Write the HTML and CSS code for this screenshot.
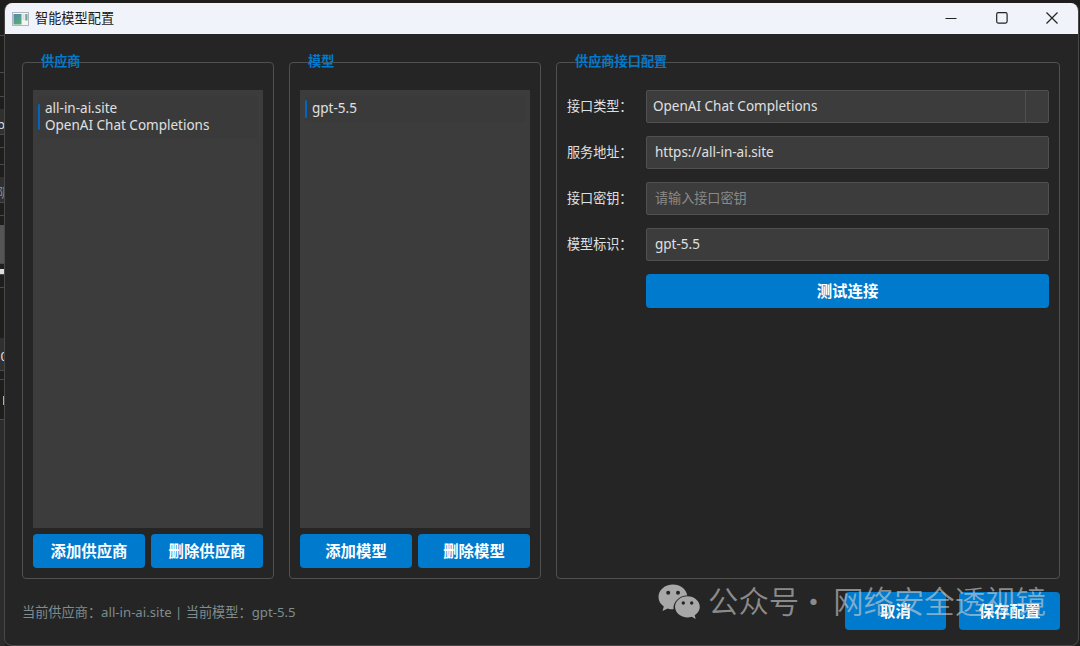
FILE: index.html
```html
<!DOCTYPE html>
<html lang="zh-CN">

<head>
  <meta charset="UTF-8">
  <meta name="viewport" content="width=device-width, initial-scale=1.0">
  <title>智能模型配置</title>
  <link rel="stylesheet" href="styles.css">
</head>

<body>

  <!-- Sliver of the main window behind the dialog -->
  <div class="backdrop">
    <div class="strip head"></div>
    <div class="strip"></div>
    <div class="strip short"></div>
    <div class="strip field"><span>p</span></div>
    <div class="strip gap"></div>
    <div class="strip wide"></div>
    <div class="strip field grey"><span>阴</span></div>
    <div class="strip gap"></div>
    <div class="strip thumb"></div>
    <div class="strip mark"></div>
    <div class="strip gap"></div>
    <div class="strip field last"><span>.0</span></div>
    <div class="strip low"></div>
    <div class="strip caret"><i></i></div>
    <div class="strip rest"></div>
  </div>

  <div class="window">
    <div class="titlebar">
      <svg class="app-icon" width="17" height="14" viewBox="0 0 17 14">
        <defs>
          <linearGradient id="pane" x1="0" y1="0" x2="0.6" y2="1">
            <stop offset="0" stop-color="#4f88b5"/>
            <stop offset="1" stop-color="#58ad74"/>
          </linearGradient>
        </defs>
        <rect x="0.5" y="0.5" width="16" height="13" fill="#f4f5f6" stroke="#b2b5b9"/>
        <rect x="1.5" y="2" width="8" height="10.5" fill="url(#pane)"/>
        <path d="M10.5 3h2M10.5 5h2M10.5 7h2" stroke="#c9ccd0"/>
        <rect x="13.3" y="2" width="2.2" height="6.5" fill="#65a99a"/>
      </svg>
      <span class="title">智能模型配置</span>
      <div class="controls">
        <svg width="12" height="12" viewBox="0 0 12 12"><path d="M0.5 6.5h11"/></svg>
        <svg width="12" height="12" viewBox="0 0 12 12"><rect x="0.7" y="0.7" width="10.4" height="10.4" rx="1.5"/></svg>
        <svg width="12" height="12" viewBox="0 0 12 12"><path d="M0.5 0.5l11 11M11.5 0.5l-11 11"/></svg>
      </div>
    </div>

    <div class="panels">
      <div class="group">
        <div class="legend">供应商</div>
        <div class="list">
          <div class="item">
            <span class="bar"></span>
            <div>all-in-ai.site<br>OpenAI Chat Completions</div>
          </div>
        </div>
        <div class="buttons">
          <button class="btn">添加供应商</button>
          <button class="btn">删除供应商</button>
        </div>
      </div>

      <div class="group">
        <div class="legend">模型</div>
        <div class="list">
          <div class="item single">
            <span class="bar"></span>
            <div>gpt-5.5</div>
          </div>
        </div>
        <div class="buttons">
          <button class="btn">添加模型</button>
          <button class="btn">删除模型</button>
        </div>
      </div>

      <div class="group config">
        <div class="legend">供应商接口配置</div>
        <div class="form">
          <span class="label">接口类型：</span>
          <div class="input combo"><span>OpenAI Chat Completions</span><i class="drop"></i></div>
          <span class="label">服务地址：</span>
          <div class="input">https://all-in-ai.site</div>
          <span class="label">接口密钥：</span>
          <div class="input placeholder">请输入接口密钥</div>
          <span class="label">模型标识：</span>
          <div class="input">gpt-5.5</div>
          <button class="btn test">测试连接</button>
        </div>
      </div>
    </div>

    <div class="footer">
      <div class="status">当前供应商：all-in-ai.site | 当前模型：gpt-5.5</div>
      <button class="btn">取消</button>
      <button class="btn">保存配置</button>
    </div>
  </div>

  <div class="watermark">
    <svg width="42" height="36" viewBox="0 0 42 36">
      <path fill-rule="evenodd" d="M15 0.5C6.800 0.500 0.500 6 0.500 13c0 4 2 7.200 5.300 9.500L4.500 27l5.200-2.600c1.800.6 3.600.8 5.800.8C15 18 21 11.500 29.300 11.200 28 5 22.300.5 15 .5ZM10.200 6.800a2 2 0 1 1 0 4 2 2 0 0 1 0-4ZM20 6.800a2 2 0 1 1 0 4 2 2 0 0 1 0-4Z"/>
      <path fill-rule="evenodd" d="M29.500 12.200c-7 0-12.500 4.800-12.500 10.600s5.500 10.600 12.500 10.600c1.500 0 2.900-.2 4.200-.6l4 2.200-1-3.700c3.200-2 5.100-5 5.100-8.500 0-5.800-5.500-10.600-12.300-10.600ZM25.300 17.300a1.700 1.700 0 1 1 0 3.400 1.700 1.700 0 0 1 0-3.400ZM33.700 17.300a1.700 1.700 0 1 1 0 3.400 1.700 1.700 0 0 1 0-3.400Z"/>
    </svg>
    <span class="account">公众号</span>
    <span class="dot">·</span>
    <span class="name">网络安全透视镜</span>
  </div>

</body>

</html>
```
FILE: styles.css
```css
* {
  box-sizing: border-box;
}

body {
  margin: 0;
  height: 646px;
  padding: 3px 1px 0 4px;
  overflow: hidden;
  position: relative;
  background-color: #1e1e1c;
  color: #e0e0e0;
  font-family: "Noto Sans", "Noto Sans CJK SC", sans-serif;
  font-size: 13.5px;
}

.backdrop {
  position: absolute;
  left: 0;
  top: 0;
  width: 5px;
  height: 646px;
  overflow: hidden;
}

.strip {
  height: 37px;
  overflow: hidden;
  border-bottom: 1px solid #4a4a4a;
}

.strip.short { height: 24px; }
.strip.head { height: 36px; }

.strip.field {
  height: 26px;
  margin-top: 12px;
  background: #303030;
  line-height: 30px;
  font-size: 13px;
}

.strip.field span { margin-left: -3px; }
.strip.grey { color: #888; }
.strip.gap { height: 13px; }
.strip.wide { height: 17px; }
.strip.thumb { height: 39px; margin-top: 9px; background: #555; }
.strip.mark { height: 6px; margin-top: 5px; background: #ddd; }
.strip.last { margin-top: 50px; height: 33px; line-height: 36px; }
.strip.low { height: 9px; }
.strip.rest { height: 300px; background: #2c2c2c; }

.strip.caret {
  height: 40px;
  padding: 16px 0 0 3px;
}

.caret i {
  display: block;
  width: 1px;
  height: 9px;
  background: #9fb4cc;
}

.window {
  position: relative;
  height: 643px;
  display: flex;
  flex-direction: column;
  background: #252525;
  border: 1px solid #484848;
  border-top: none;
  border-radius: 8px;
  overflow: hidden;
}

.titlebar {
  height: 31px;
  flex: none;
  display: flex;
  align-items: center;
  padding: 0 20px 0 7px;
  background: #f0f3fa;
  color: #191919;
}

.title {
  margin: -2px 0 0 6px;
  font-size: 13.2px;
}

.controls {
  display: flex;
  gap: 38.500px;
  margin: -1px 0 0 auto;
}

.controls svg {
  fill: none;
  stroke: #222;
  stroke-width: 1.2;
}

.panels {
  display: flex;
  gap: 15px;
  height: 517px;
  margin: 28px 18px 0 17px;
}

.group {
  width: 252px;
  flex: none;
  display: flex;
  flex-direction: column;
  padding: 0 10px 10px;
  border: 1px solid #505050;
  border-radius: 4px;
}

.group.config {
  flex: 1;
}

/* the title sits on the frame line */
.legend {
  height: 39px;
  margin-top: -12px;
  padding-left: 8px;
  color: #007acc;
  font-weight: bold;
  font-size: 13.2px;
  line-height: 20px;
}

.list {
  flex: 1;
  padding: 5px;
  background: #3c3c3c;
}

.item {
  display: flex;
  align-items: center;
  height: 44px;
  border-radius: 4px;
  background: #3a3a3a;
  line-height: 17.500px;
}

.item.single {
  height: 27px;
}

.bar {
  width: 2px;
  height: 26px;
  margin-right: 5px;
  border-radius: 1px;
  background: #0067c0;
}

.single .bar {
  height: 18px;
}

.buttons {
  display: flex;
  gap: 6px;
  margin-top: 6px;
}

.btn {
  flex: 1;
  height: 34px;
  padding: 2px 0 0;
  border: none;
  border-radius: 4px;
  background: #007acc;
  color: white;
  font: bold 15.400px/32px "Noto Sans", "Noto Sans CJK SC", sans-serif;
}

.form {
  display: grid;
  grid-template-columns: 68px 403px;
  column-gap: 11px;
  row-gap: 13px;
  align-items: center;
}

.label {
  margin-top: -2px;
  white-space: nowrap;
  font-size: 13.1px;
}

.input {
  height: 33px;
  padding-left: 8px;
  border: 1px solid #505050;
  border-radius: 2px;
  background: #3c3c3c;
  line-height: 31px;
}

.combo {
  display: flex;
  justify-content: space-between;
  padding-left: 6px;
}

.drop {
  width: 23px;
  border-left: 1px solid #505050;
}

.placeholder {
  color: #8a8a8a;
  font-size: 13.1px;
}

.test {
  grid-column: 2;
}

.footer {
  display: flex;
  gap: 13px;
  align-items: center;
  height: 38px;
  margin: 13px 18px 0 17px;
}

.footer .btn {
  flex: none;
  width: 101px;
  height: 38px;
}

.status {
  flex: 1;
  color: #7f8c8d;
  font-size: 13.200px;
}

.watermark {
  position: absolute;
  left: 658px;
  top: 581px;
  display: flex;
  height: 40px;
  color: rgba(210, 210, 210, 0.6);
  font: 350 30.400px/38px "Noto Sans CJK SC", sans-serif;
  white-space: nowrap;
}

.watermark svg {
  margin-top: 3px;
  fill: #a8a8a8;
}

.account {
  margin-left: 8px;
}

.dot {
  width: 34px;
  text-indent: -1px;
}
```
